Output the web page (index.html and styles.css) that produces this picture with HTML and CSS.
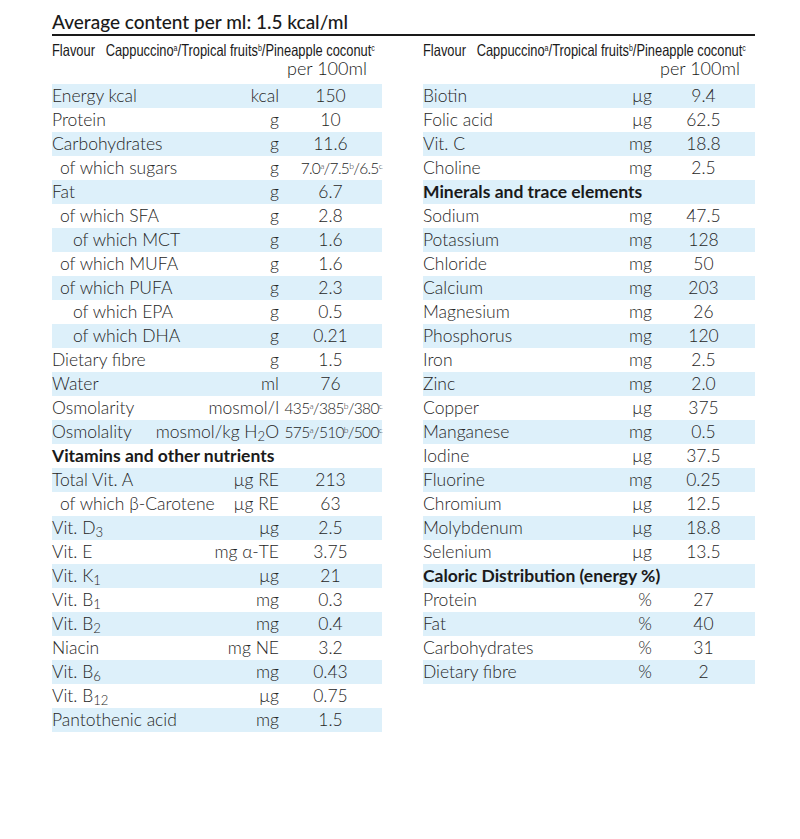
FILE: index.html
```html
<!DOCTYPE html>
<html lang="en">
<head>
<meta charset="utf-8">
<title>Average content per ml</title>
<link rel="stylesheet" href="styles.css">
</head>
<body>
<div class="page">
  <h1 class="title">Average content per ml: 1.5 kcal/ml</h1>
  <div class="tables">
    <div class="table">
      <div class="flavour-wrap"><div class="flavour">Flavour&nbsp;&nbsp; Cappuccino<sup>a</sup>/Tropical fruits<sup>b</sup>/Pineapple coconut<sup>c</sup></div></div>
      <div class="per"><span class="per-text">per 100ml</span></div>
      <div class="row"><span class="lbl">Energy kcal</span><span class="unit">kcal</span><span class="val">150</span></div>
      <div class="row"><span class="lbl">Protein</span><span class="unit">g</span><span class="val">10</span></div>
      <div class="row"><span class="lbl">Carbohydrates</span><span class="unit">g</span><span class="val">11.6</span></div>
      <div class="row"><span class="lbl i1">of which sugars</span><span class="unit">g</span><span class="val small">7.0<sup>a</sup>/7.5<sup>b</sup>/6.5<sup>c</sup></span></div>
      <div class="row"><span class="lbl">Fat</span><span class="unit">g</span><span class="val">6.7</span></div>
      <div class="row"><span class="lbl i1">of which SFA</span><span class="unit">g</span><span class="val">2.8</span></div>
      <div class="row"><span class="lbl i2">of which MCT</span><span class="unit">g</span><span class="val">1.6</span></div>
      <div class="row"><span class="lbl i1">of which MUFA</span><span class="unit">g</span><span class="val">1.6</span></div>
      <div class="row"><span class="lbl i1">of which PUFA</span><span class="unit">g</span><span class="val">2.3</span></div>
      <div class="row"><span class="lbl i2">of which EPA</span><span class="unit">g</span><span class="val">0.5</span></div>
      <div class="row"><span class="lbl i2">of which DHA</span><span class="unit">g</span><span class="val">0.21</span></div>
      <div class="row"><span class="lbl">Dietary fibre</span><span class="unit">g</span><span class="val">1.5</span></div>
      <div class="row"><span class="lbl">Water</span><span class="unit">ml</span><span class="val">76</span></div>
      <div class="row"><span class="lbl">Osmolarity</span><span class="unit">mosmol/l</span><span class="val small">435<sup>a</sup>/385<sup>b</sup>/380<sup>c</sup></span></div>
      <div class="row"><span class="lbl">Osmolality</span><span class="unit">mosmol/kg H<sub>2</sub>O</span><span class="val small">575<sup>a</sup>/510<sup>b</sup>/500<sup>c</sup></span></div>
      <div class="row section">Vitamins and other nutrients</div>
      <div class="row"><span class="lbl">Total Vit. A</span><span class="unit">µg RE</span><span class="val">213</span></div>
      <div class="row"><span class="lbl i1">of which β-Carotene</span><span class="unit">µg RE</span><span class="val">63</span></div>
      <div class="row"><span class="lbl">Vit. D<sub>3</sub></span><span class="unit">µg</span><span class="val">2.5</span></div>
      <div class="row"><span class="lbl">Vit. E</span><span class="unit">mg α-TE</span><span class="val">3.75</span></div>
      <div class="row"><span class="lbl">Vit. K<sub>1</sub></span><span class="unit">µg</span><span class="val">21</span></div>
      <div class="row"><span class="lbl">Vit. B<sub>1</sub></span><span class="unit">mg</span><span class="val">0.3</span></div>
      <div class="row"><span class="lbl">Vit. B<sub>2</sub></span><span class="unit">mg</span><span class="val">0.4</span></div>
      <div class="row"><span class="lbl">Niacin</span><span class="unit">mg NE</span><span class="val">3.2</span></div>
      <div class="row"><span class="lbl">Vit. B<sub>6</sub></span><span class="unit">mg</span><span class="val">0.43</span></div>
      <div class="row"><span class="lbl">Vit. B<sub>12</sub></span><span class="unit">µg</span><span class="val">0.75</span></div>
      <div class="row"><span class="lbl">Pantothenic acid</span><span class="unit">mg</span><span class="val">1.5</span></div>
    </div>
    <div class="table">
      <div class="flavour-wrap"><div class="flavour">Flavour&nbsp;&nbsp; Cappuccino<sup>a</sup>/Tropical fruits<sup>b</sup>/Pineapple coconut<sup>c</sup></div></div>
      <div class="per"><span class="per-text">per 100ml</span></div>
      <div class="row"><span class="lbl">Biotin</span><span class="unit">µg</span><span class="val">9.4</span></div>
      <div class="row"><span class="lbl">Folic acid</span><span class="unit">µg</span><span class="val">62.5</span></div>
      <div class="row"><span class="lbl">Vit. C</span><span class="unit">mg</span><span class="val">18.8</span></div>
      <div class="row"><span class="lbl">Choline</span><span class="unit">mg</span><span class="val">2.5</span></div>
      <div class="row section">Minerals and trace elements</div>
      <div class="row"><span class="lbl">Sodium</span><span class="unit">mg</span><span class="val">47.5</span></div>
      <div class="row"><span class="lbl">Potassium</span><span class="unit">mg</span><span class="val">128</span></div>
      <div class="row"><span class="lbl">Chloride</span><span class="unit">mg</span><span class="val">50</span></div>
      <div class="row"><span class="lbl">Calcium</span><span class="unit">mg</span><span class="val">203</span></div>
      <div class="row"><span class="lbl">Magnesium</span><span class="unit">mg</span><span class="val">26</span></div>
      <div class="row"><span class="lbl">Phosphorus</span><span class="unit">mg</span><span class="val">120</span></div>
      <div class="row"><span class="lbl">Iron</span><span class="unit">mg</span><span class="val">2.5</span></div>
      <div class="row"><span class="lbl">Zinc</span><span class="unit">mg</span><span class="val">2.0</span></div>
      <div class="row"><span class="lbl">Copper</span><span class="unit">µg</span><span class="val">375</span></div>
      <div class="row"><span class="lbl">Manganese</span><span class="unit">mg</span><span class="val">0.5</span></div>
      <div class="row"><span class="lbl">Iodine</span><span class="unit">µg</span><span class="val">37.5</span></div>
      <div class="row"><span class="lbl">Fluorine</span><span class="unit">mg</span><span class="val">0.25</span></div>
      <div class="row"><span class="lbl">Chromium</span><span class="unit">µg</span><span class="val">12.5</span></div>
      <div class="row"><span class="lbl">Molybdenum</span><span class="unit">µg</span><span class="val">18.8</span></div>
      <div class="row"><span class="lbl">Selenium</span><span class="unit">µg</span><span class="val">13.5</span></div>
      <div class="row section">Caloric Distribution (energy %)</div>
      <div class="row"><span class="lbl">Protein</span><span class="unit">%</span><span class="val">27</span></div>
      <div class="row"><span class="lbl">Fat</span><span class="unit">%</span><span class="val">40</span></div>
      <div class="row"><span class="lbl">Carbohydrates</span><span class="unit">%</span><span class="val">31</span></div>
      <div class="row"><span class="lbl">Dietary fibre</span><span class="unit">%</span><span class="val">2</span></div>
    </div>
  </div>
</div>
</body>
</html>
```
FILE: styles.css
```css
html, body {
  margin: 0;
  padding: 0;
  background: #ffffff;
}
body {
  font-family: "Lato", "Liberation Sans", sans-serif;
  color: #262626;
}
.page {
  width: 703px;
  padding: 11px 0 0 52px;
}
.title {
  margin: 0;
  font-family: "Lato", "Liberation Sans", sans-serif;
  font-weight: 500;
  font-size: 19px;
  line-height: 22px;
  color: #1a1a1a;
  padding-bottom: 1px;
  border-bottom: 2px solid #1a1a1a;
}
.tables {
  display: grid;
  grid-template-columns: 330px 332px;
  column-gap: 41px;
  padding-top: 6px;
}
.table {
  display: flex;
  flex-direction: column;
  min-width: 0;
}
.flavour-wrap {
  height: 16px;
  line-height: 16px;
}
.flavour {
  display: inline-block;
  font-family: "Liberation Sans", sans-serif;
  font-size: 16.5px;
  line-height: 16px;
  color: #1a1a1a;
  white-space: nowrap;
  transform: scaleX(0.78);
  transform-origin: left center;
}
.flavour sup, .val sup {
  font-size: 0.55em;
  vertical-align: 0.6em;
  line-height: 0;
}
.per {
  display: grid;
  grid-template-columns: 1fr 103px;
  font-weight: 300;
  font-size: 18px;
  line-height: 18px;
  color: #1a1a1a;
  padding-top: 1px;
  padding-bottom: 7px;
}
.per-text {
  grid-column: 2;
  padding-left: 8px;
  white-space: nowrap;
}
.row {
  display: grid;
  grid-template-columns: 1fr auto 103px;
  align-items: center;
  height: 24px;
  font-weight: 300;
  font-size: 17.5px;
  line-height: 24px;
  white-space: nowrap;
}
.row:nth-child(odd) {
  background: #ddf0fa;
}
.lbl.i1 { padding-left: 8px; }
.lbl.i2 { padding-left: 21px; }
.unit {
  text-align: right;
}
.val {
  text-align: center;
}
.val.small {
  font-size: 15.5px;
  letter-spacing: -0.7px;
  text-align: right;
}
sub {
  font-size: 0.75em;
  vertical-align: -0.2em;
  line-height: 0;
}
.section {
  display: block;
  font-weight: 700;
  color: #1a1a1a;
}
```
